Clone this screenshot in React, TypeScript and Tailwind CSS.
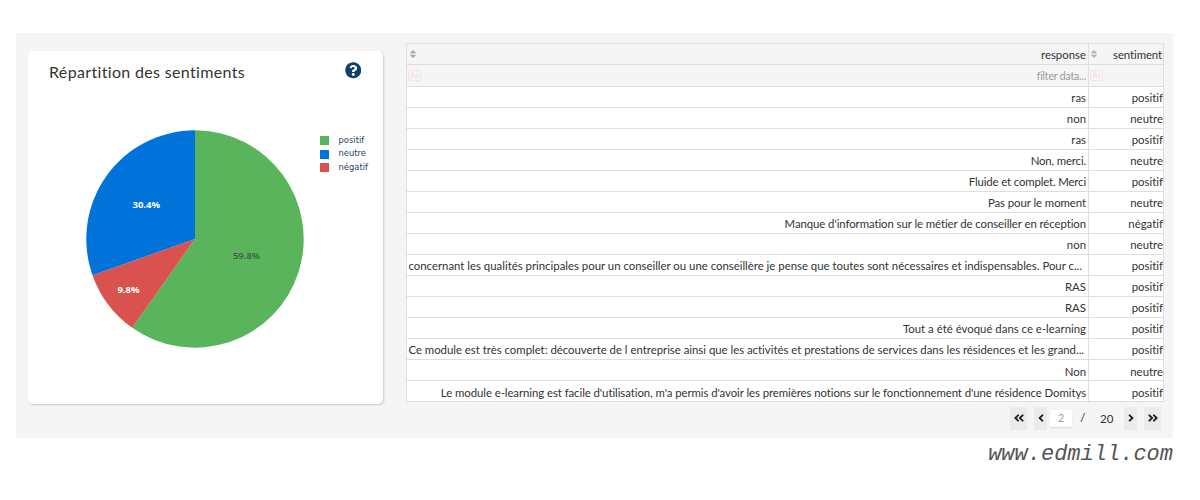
import React from "react";
import {
  FaQuestionCircle,
  FaSort,
  FaAngleDoubleLeft,
  FaAngleLeft,
  FaAngleRight,
  FaAngleDoubleRight,
} from "react-icons/fa";

type Row = { response: string; sentiment: string; className?: string };

const rows: Row[] = [
  { response: "ras", sentiment: "positif" },
  { response: "non", sentiment: "neutre" },
  { response: "ras", sentiment: "positif" },
  { response: "Non, merci.", sentiment: "neutre", className: "tracking-[-0.15px]" },
  { response: "Fluide et complet. Merci", sentiment: "positif", className: "tracking-[-0.15px]" },
  { response: "Pas pour le moment", sentiment: "neutre", className: "tracking-[-0.07px]" },
  {
    response: "Manque d'information sur le métier de conseiller en réception",
    sentiment: "négatif",
    className: "tracking-[-0.08px]",
  },
  { response: "non", sentiment: "neutre" },
  {
    response:
      "concernant les qualités principales pour un conseiller ou une conseillère je pense que toutes sont nécessaires et indispensables. Pour c...",
    sentiment: "positif",
    className: "pr-[4px] tracking-[-0.008px]",
  },
  { response: "RAS", sentiment: "positif" },
  { response: "RAS", sentiment: "positif" },
  { response: "Tout a été évoqué dans ce e-learning", sentiment: "positif" },
  {
    response:
      "Ce module est très complet: découverte de l entreprise ainsi que les activités et prestations de services dans les résidences et les grand...",
    sentiment: "positif",
    className: "pr-[2px] tracking-[-0.018px]",
  },
  { response: "Non", sentiment: "neutre" },
  {
    response:
      "Le module e-learning est facile d'utilisation, m'a permis d'avoir les premières notions sur le fonctionnement d'une résidence Domitys",
    sentiment: "positif",
    className: "tracking-[-0.07px]",
  },
];

const legend = [
  { label: "positif", color: "bg-[#59b45b]" },
  { label: "neutre", color: "bg-[#0073da]" },
  { label: "négatif", color: "bg-[#da524f]" },
];

const CX = 109;
const R = 108.7;

function slice(from: number, to: number) {
  const point = (t: number) => {
    const a = t * 2 * Math.PI;
    return `${CX + R * Math.sin(a)} ${CX - R * Math.cos(a)}`;
  };
  return `M${CX} ${CX}L${point(from)}A${R} ${R} 0 ${to - from > 0.5 ? 1 : 0} 1 ${point(to)}Z`;
}

function Pie() {
  return (
    <svg width="218" height="218" viewBox="0 0 218 218" className="font-['Open_Sans',sans-serif] text-[9.5px] font-bold">
      <path d={slice(0, 0.598)} fill="#59b45b" />
      <path d={slice(0.598, 0.696)} fill="#da524f" />
      <path d={slice(0.696, 1)} fill="#0073da" />
      <text x="60.3" y="78" textAnchor="middle" fill="#ffffff">30.4%</text>
      <text x="42.5" y="163" textAnchor="middle" fill="#ffffff">9.8%</text>
      <text x="160.5" y="128.5" textAnchor="middle" fill="#41544a" className="font-semibold">59.8%</text>
    </svg>
  );
}

function CaseToggle() {
  return (
    <span className="flex h-[11px] w-[13px] shrink-0 items-center justify-center rounded-[2px] border border-[#fbe1e6] text-[7px] leading-none text-[#fbdde3]">
      Aa
    </span>
  );
}

function ResponseTable() {
  return (
    <div className="w-[758px] border-t border-l border-[#e0e0e0] bg-white text-[11.4px] leading-none text-[#333] [font-variant-ligatures:none] [&>div]:grid [&>div]:grid-cols-[682px_75px] [&>div>div]:flex [&>div>div]:items-center [&>div>div]:border-r [&>div>div]:border-b [&>div>div]:border-[#dedede]">
      <div className="h-[21px] bg-[#f5f5f5]">
        <div className="justify-between pt-[2px] pr-[2px] pl-px">
          <FaSort className="mb-[2px] size-[10px] text-[#aaa]" />
          <span>response</span>
        </div>
        <div className="justify-between pt-[2px] pr-px">
          <FaSort className="mb-[2px] size-[10px] text-[#b5b5b5]" />
          <span className="tracking-[-0.1px]">sentiment</span>
        </div>
      </div>
      <div className="h-[21.6px] bg-[#f5f5f5]">
        <div className="justify-between pr-[2px] pl-px">
          <CaseToggle />
          <span className="pt-px text-[10.5px] tracking-[-0.17px] text-[#999]">filter data...</span>
        </div>
        <div className="pl-px">
          <CaseToggle />
        </div>
      </div>
      {rows.map((row, i) => (
        <div key={i} className="h-[21.05px]">
          <div className="justify-end pt-[2px] pr-[2px] whitespace-nowrap">
            <span className={row.className}>{row.response}</span>
          </div>
          <div className="justify-end pt-[2px]">{row.sentiment}</div>
        </div>
      ))}
    </div>
  );
}

function Pager() {
  const button = "flex h-[23px] items-center justify-center bg-[#ebebeb]";
  return (
    <div className="mt-[4px] flex h-[24px] items-center pr-[3px] text-[12px] text-[#333]">
      <div className="ml-auto flex items-center">
        <span className={`${button} w-[17px]`}><FaAngleDoubleLeft className="size-[12px] text-[#222]" /></span>
        <span className={`${button} ml-[7px] w-[13px]`}><FaAngleLeft className="size-[12px] text-[#222]" /></span>
        <span className="ml-[3px] flex h-[17px] w-[22px] items-center justify-center bg-white pt-px text-[10.5px] text-[#999] shadow-[0_1px_1px_#ddd]">2</span>
        <span className="ml-[8px] w-[4px]">/</span>
        <span className="ml-[16px] w-[14px] text-[11.5px]">20</span>
        <span className={`${button} ml-[10px] w-[13px]`}><FaAngleRight className="size-[12px] text-[#222]" /></span>
        <span className={`${button} ml-[7px] w-[17px]`}><FaAngleDoubleRight className="size-[12px] text-[#222]" /></span>
      </div>
    </div>
  );
}

export default function App() {
  return (
    <div className="h-[500px] w-[1200px] overflow-hidden bg-white pt-[33px] pl-[16px] font-[Lato,sans-serif]">
      <main className="flex h-[405px] w-[1157px] bg-[#f5f5f5]">
        <section className="mt-[18px] ml-[12px] h-[353px] w-[355px] rounded-[5px] bg-white shadow-[1px_1px_2px_#c8c8c8]">
          <header className="flex h-[79px] items-start justify-between pt-[11px] pr-[22px] pl-[21px]">
            <h1 className="-mt-px text-[16px] leading-[22px] tracking-[0.34px] text-[#333] [font-variant-ligatures:none]">
              Répartition des sentiments
            </h1>
            <FaQuestionCircle className="size-[16.5px] text-[#0d436b]" />
          </header>
          <div className="flex pl-[58px]">
            <Pie />
            <ul className="mt-[4px] ml-[16px] font-['DejaVu_Sans',sans-serif] text-[8.4px] leading-[13.4px] text-[#2a3f5f]">
              {legend.map((item) => (
                <li key={item.label} className="flex items-center gap-[9.5px]">
                  <span className={`size-[9px] ${item.color}`} />
                  {item.label}
                </li>
              ))}
            </ul>
          </div>
        </section>
        <section className="mt-[10px] ml-[23px]">
          <ResponseTable />
          <Pager />
        </section>
      </main>
      <footer className="mr-[27px] pt-[4px] text-right font-['Liberation_Mono',monospace] text-[22px] leading-[25px] text-[#555] italic">
        www.edmill.com
      </footer>
    </div>
  );
}
